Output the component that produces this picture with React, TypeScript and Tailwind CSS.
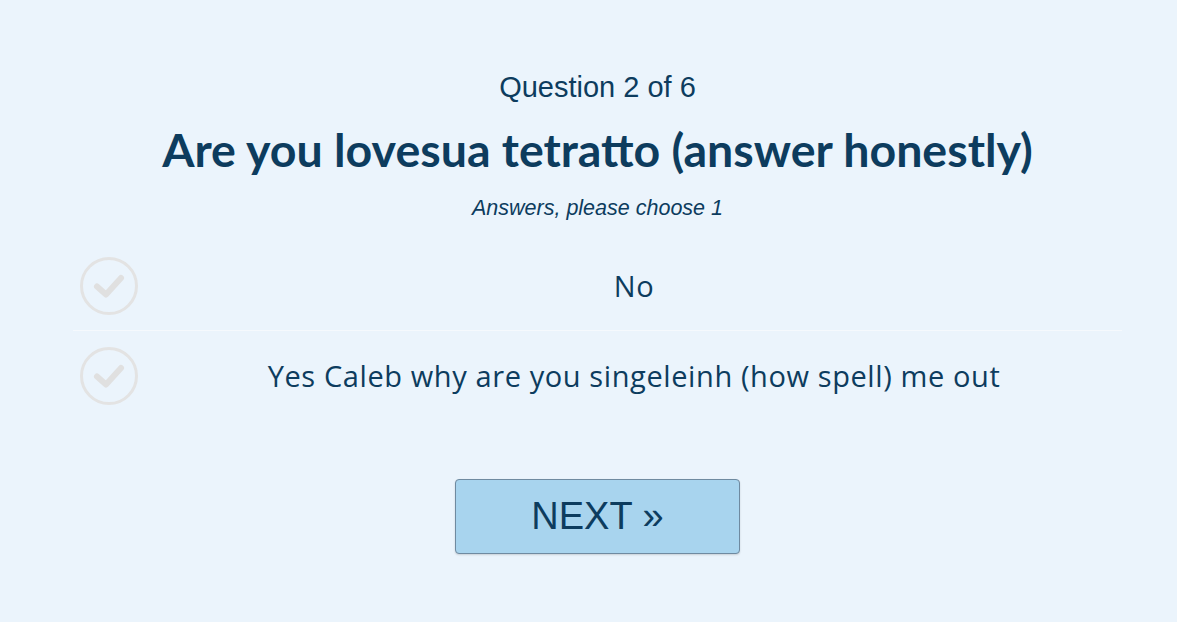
const answers = ["No", "Yes Caleb why are you singeleinh (how spell) me out"];

function CheckCircle() {
  return (
    <svg width="58" height="58" viewBox="0 0 58 58" fill="none">
      <circle cx="29" cy="29" r="27.5" stroke="#e3e3e3" strokeWidth="3" />
      <path
        d="M17 29.5 L26 37.5 L41 21"
        stroke="#e0e0e0"
        strokeWidth="6"
        strokeLinecap="round"
        strokeLinejoin="round"
      />
    </svg>
  );
}

export default function App() {
  return (
    <div className="min-h-[622px] w-full bg-[#ebf4fc] text-[#0d3c5e]">
      <div className="pl-[73px] pr-[55px] pt-[68px]">
        <div className="text-center font-['Liberation_Sans',Arial,sans-serif] text-[29px] leading-[38px]">
          Question 2 of 6
        </div>
        <h1 className="mt-[15px] text-center font-['Lato',sans-serif] text-[46.5px] font-bold leading-[56px]">
          Are you lovesua tetratto (answer honestly)
        </h1>
        <div className="mt-[19px] text-center font-['Liberation_Sans',Arial,sans-serif] text-[21.5px] italic leading-[25px]">
          Answers, please choose 1
        </div>

        <div className="mt-[21px]">
          {answers.map((a, i) => (
            <div
              key={i}
              className={
                "flex h-[89px] items-center " +
                (i === 0 ? "border-b border-[#f5f9fd]" : "")
              }
            >
              <div className="w-[73px] shrink-0 pl-[7px]">
                <CheckCircle />
              </div>
              <div className="flex-1 text-center font-['Open_Sans',sans-serif] text-[29px] leading-[36px] tracking-[0.6px]">
                {a}
              </div>
            </div>
          ))}
        </div>

        <div className="mt-[59px] flex justify-center">
          <button className="h-[75px] w-[285px] rounded-[4px] border border-[#6f8aa0] bg-[#a8d4ee] font-['Liberation_Sans',Arial,sans-serif] text-[38px] text-[#0d3c5e] shadow-[0_1px_2px_rgba(0,0,0,0.15)]">
            NEXT »
          </button>
        </div>
      </div>
    </div>
  );
}
